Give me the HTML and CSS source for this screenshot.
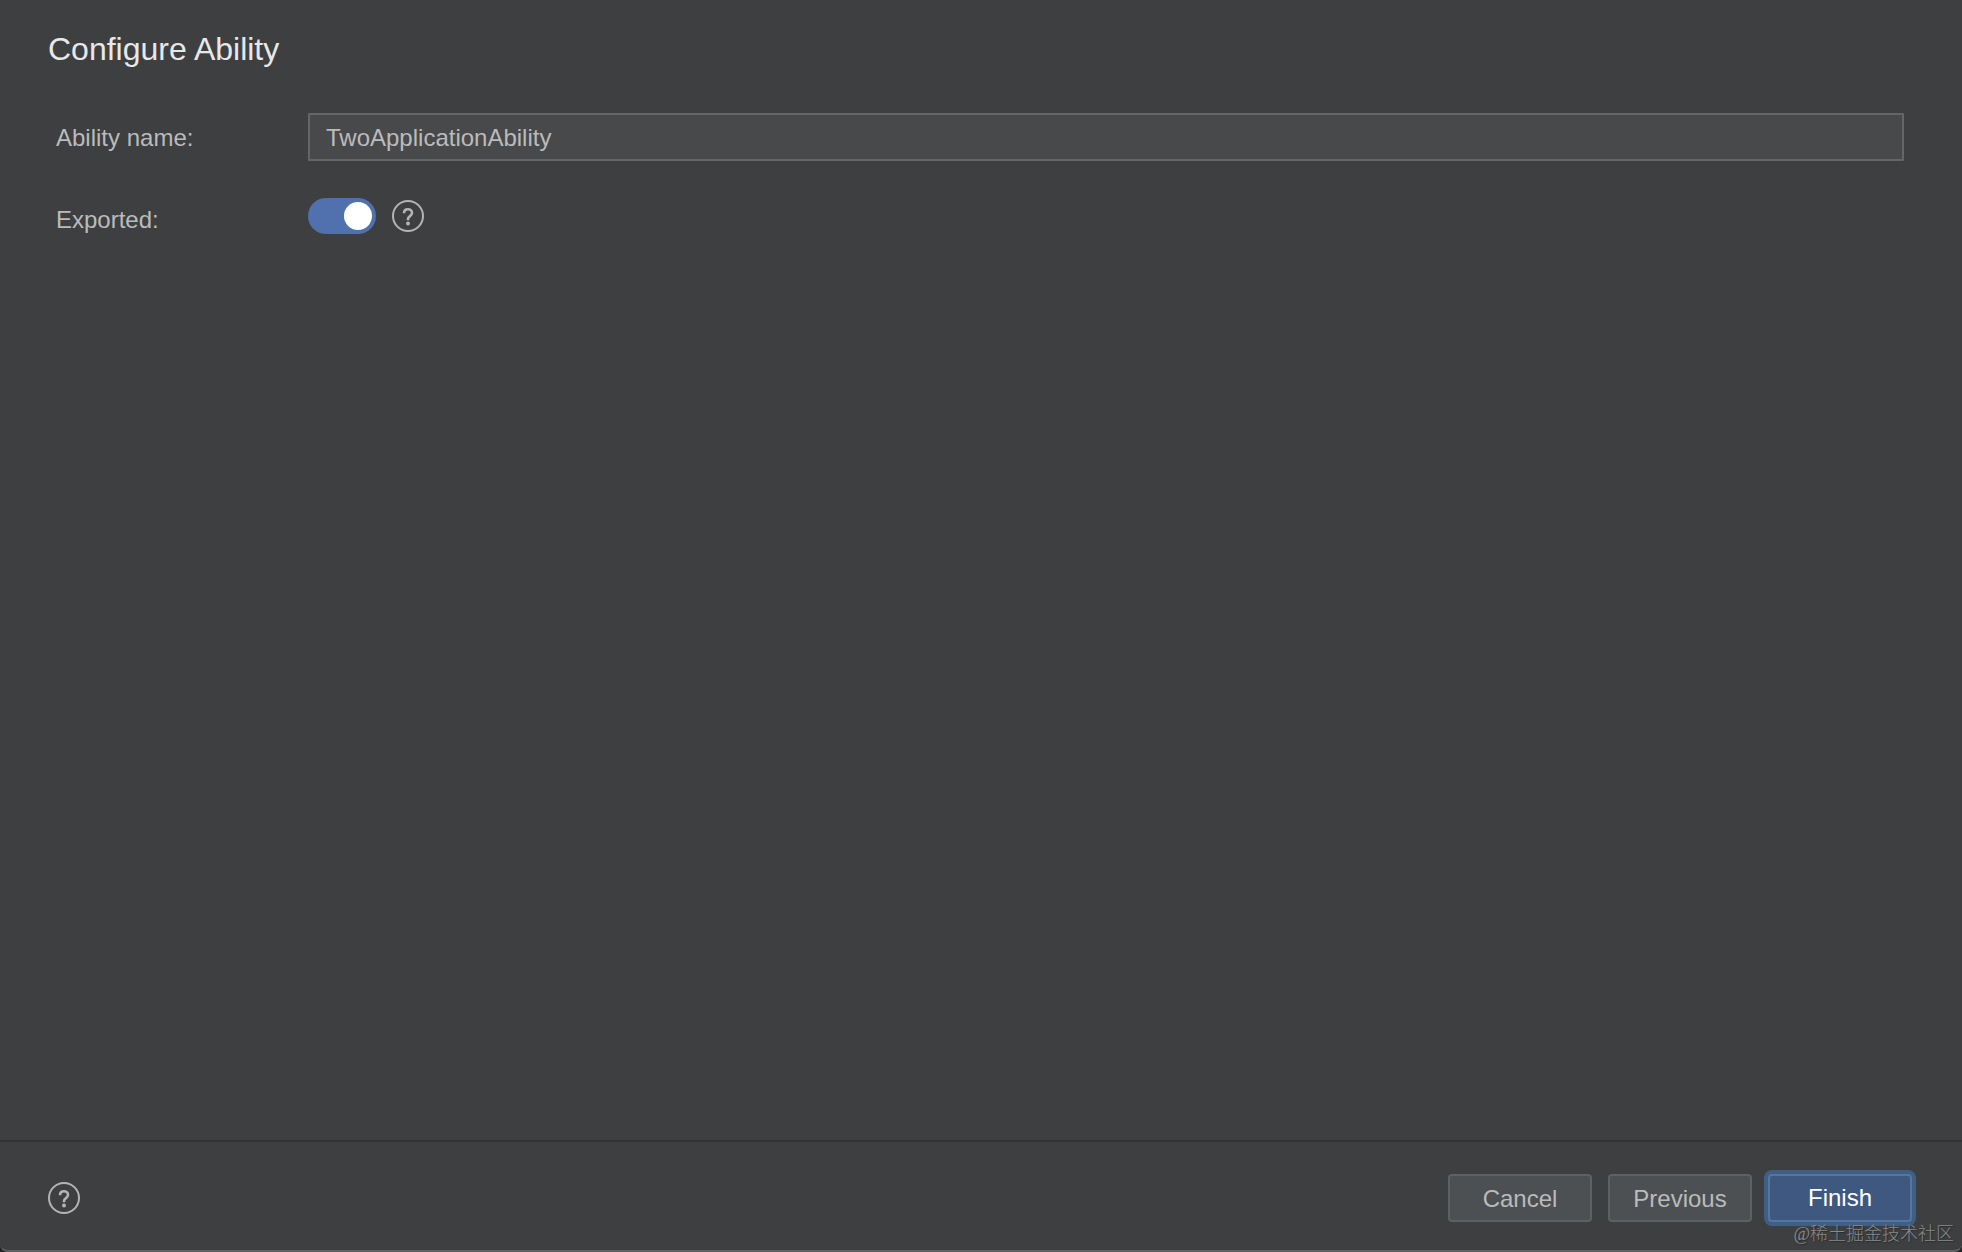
FILE: index.html
```html
<!DOCTYPE html>
<html lang="en">
<head>
    <meta charset="UTF-8">
    <meta name="viewport" content="width=device-width, initial-scale=1.0">
    <title>Configure Ability</title>
    <link rel="stylesheet" href="styles.css">
</head>
<body>
    <form class="dialog">
        <main class="content">
            <h1>Configure Ability</h1>

            <div class="form-row">
                <label for="ability-name">Ability name:</label>
                <input type="text" id="ability-name" class="text-field" value="TwoApplicationAbility" spellcheck="false">
            </div>

            <div class="form-row">
                <label for="exported" class="exported-label">Exported:</label>
                <div class="toggle-group">
                    <input type="checkbox" id="exported" class="toggle" role="switch" checked>
                    <button type="button" class="help" aria-label="About exported">
                        <svg viewBox="0 0 32 32" width="32" height="32" fill="none" stroke="currentColor" stroke-width="2">
                            <circle cx="16" cy="16" r="15"/>
                            <path stroke-width="2.600" d="M12 13.200C12 10.800 13.700 9.300 16 9.300s4 1.500 4 3.700c0 3-4 3.200-4 6v1.300"/>
                            <circle cx="16" cy="23.500" r="2" fill="currentColor" stroke="none"/>
                        </svg>
                    </button>
                </div>
            </div>
        </main>

        <footer class="footer">
            <button type="button" class="help" aria-label="Help">
                <svg viewBox="0 0 32 32" width="32" height="32" fill="none" stroke="currentColor" stroke-width="2">
                    <circle cx="16" cy="16" r="15"/>
                    <path stroke-width="2.600" d="M12 13.200C12 10.800 13.700 9.300 16 9.300s4 1.500 4 3.700c0 3-4 3.200-4 6v1.300"/>
                    <circle cx="16" cy="23.500" r="2" fill="currentColor" stroke="none"/>
                </svg>
            </button>
            <div class="actions">
                <button type="button" class="btn">Cancel</button>
                <button type="button" class="btn">Previous</button>
                <button type="submit" class="btn btn-primary">Finish</button>
            </div>
            <span class="watermark" lang="zh-CN">@稀土掘金技术社区</span>
        </footer>
    </form>
</body>
</html>
```
FILE: styles.css
```css
* {
    box-sizing: border-box;
}

html {
    background-color: #242526;
}

body {
    margin: 0;
    font-family: "Liberation Sans", Arial, sans-serif;
    font-size: 24px;
    line-height: 28px;
    color: #bbbbbb;
}

.dialog {
    display: flex;
    flex-direction: column;
    min-height: 100vh;
    border-bottom: 2px solid #606163;
    border-radius: 0 0 8px 8px;
    background-color: #3d3f41;
}

.content {
    flex: 1;
    padding: 31px 58px 32px 56px;
}

h1 {
    margin: 0 0 46px -8px;
    font-size: 32px;
    line-height: 36px;
    font-weight: normal;
    color: #e8e8e8;
}

.form-row {
    display: grid;
    grid-template-columns: 252px 1fr;
    align-items: center;
    margin-bottom: 37px;
}

label {
    padding-top: 2px;
}

.text-field {
    width: 100%;
    height: 48px;
    padding: 2px 16px 0;
    border: 2px solid #646668;
    border-radius: 1px;
    background-color: #48494a;
    color: #bbbbbb;
    font: inherit;
    outline: none;
}

.exported-label {
    padding-top: 8px;
}

.toggle-group {
    display: flex;
    align-items: center;
    gap: 16px;
}

.toggle {
    appearance: none;
    display: flex;
    align-items: center;
    width: 68px;
    height: 36px;
    margin: 0;
    padding: 4px;
    border-radius: 18px;
    background-color: #6b6e70;
}

.toggle::before {
    content: "";
    width: 28px;
    height: 28px;
    border-radius: 50%;
    background-color: #ffffff;
}

.toggle:checked {
    justify-content: flex-end;
    background-color: #5070ae;
}

.help {
    display: flex;
    padding: 0;
    border: none;
    background: none;
    color: #b4b4b4;
}

.footer {
    position: relative;
    display: flex;
    align-items: center;
    justify-content: space-between;
    padding: 32px 50px 28px 48px;
    border-top: 2px solid #323334;
}

.actions {
    display: flex;
    gap: 16px;
}

.btn {
    width: 144px;
    height: 48px;
    padding: 2px 0 0;
    border: 2px solid #5e6162;
    border-radius: 4px;
    background-color: #4c5052;
    color: #bbbbbb;
    font: inherit;
}

.btn-primary {
    padding: 0;
    border-color: #57759f;
    background-color: #3e5880;
    color: #ffffff;
    box-shadow: 0 0 0 4px #3e6086;
}

/* sits over the lower edge of the Finish button */
.watermark {
    position: absolute;
    right: 8px;
    bottom: 4px;
    font-family: "Liberation Serif", "Noto Sans CJK SC", serif;
    font-size: 18px;
    line-height: 24px;
    font-weight: 300;
    color: #88898b;
    text-shadow: 1px 1px 1px #2a2b2c;
    pointer-events: none;
}
```
